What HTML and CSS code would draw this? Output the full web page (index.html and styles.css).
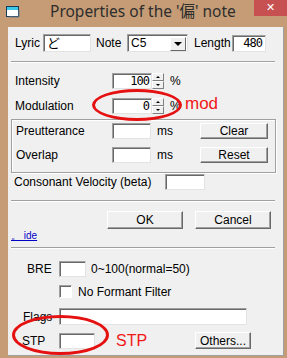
FILE: index.html
```html
<!DOCTYPE html>
<html lang="en">
<head>
    <meta charset="UTF-8">
    <title>Properties</title>
    <link rel="stylesheet" href="styles.css">
</head>
<body>
    <div class="window">
        <div class="titlebar">
            <svg class="app-icon" width="14" height="12" viewBox="0 0 14 12">
                <rect x="0.5" y="0.5" width="12" height="10" fill="#fff" stroke="#1a3a5a"/>
                <rect x="1" y="1" width="11" height="3" fill="#3cc8e8"/>
                <path d="M13 4 V11 H3" fill="none" stroke="#6a7a8a"/>
            </svg>
            <span class="title">Properties of the '偏' note</span>
            <span class="close">✕</span>
        </div>

        <div class="client">
            <div class="row row-top">
                <span class="lbl lbl-lyric">Lyric</span>
                <div class="field f-lyric">ど</div>
                <span class="lbl lbl-note">Note</span>
                <div class="select">
                    <span class="sel-text">C5</span>
                    <span class="sel-btn"><i class="tri-down big"></i></span>
                </div>
                <span class="lbl lbl-length">Length</span>
                <div class="field f-length num">480</div>
            </div>

            <div class="sep sep-1"></div>

            <div class="row row-spin">
                <span class="lbl lbl-wide">Intensity</span>
                <div class="field f-spin num">100</div>
                <div class="arrows"><span class="arr"><i class="tri-up"></i></span><span class="arr"><i class="tri-down"></i></span></div>
                <span class="pct">%</span>
            </div>
            <div class="row row-spin row-mod">
                <span class="lbl lbl-wide">Modulation</span>
                <div class="field f-spin num">0</div>
                <div class="arrows"><span class="arr"><i class="tri-up"></i></span><span class="arr"><i class="tri-down"></i></span></div>
                <span class="pct">%</span>
            </div>

            <div class="group">
                <div class="row g-row">
                    <span class="lbl lbl-group">Preutterance</span>
                    <div class="field f-ms"></div>
                    <span class="unit">ms</span>
                    <button class="btn btn-small">Clear</button>
                </div>
                <div class="row g-row g-row-2">
                    <span class="lbl lbl-group">Overlap</span>
                    <div class="field f-ms"></div>
                    <span class="unit">ms</span>
                    <button class="btn btn-small">Reset</button>
                </div>
            </div>

            <div class="row row-cons">
                <span class="lbl lbl-cons">Consonant Velocity (beta)</span>
                <div class="field f-cons"></div>
            </div>

            <div class="sep sep-2"></div>

            <div class="row row-buttons">
                <button class="btn btn-dlg">OK</button>
                <button class="btn btn-dlg">Cancel</button>
            </div>

            <a class="link" href="#">。 ide</a>

            <div class="sep sep-3"></div>

            <div class="row row-bre">
                <span class="lbl lbl-bre">BRE</span>
                <div class="field f-bre"></div>
                <span class="hint">0~100(normal=50)</span>
            </div>
            <div class="row row-check">
                <span class="check"></span>
                <span class="check-text">No Formant Filter</span>
            </div>
            <div class="row row-flags">
                <span class="lbl lbl-bre">Flags</span>
                <div class="field f-flags"></div>
            </div>
            <div class="row row-stp">
                <span class="lbl lbl-bre">STP</span>
                <div class="field f-stp"></div>
                <button class="btn btn-others">Others...</button>
            </div>
        </div>

        <!-- hand drawn marks on top of the screenshot -->
        <div class="mark ring-mod"></div>
        <div class="mark note-mod">mod</div>
        <div class="mark ring-stp"></div>
        <div class="mark note-stp">STP</div>
    </div>
</body>
</html>
```

FILE: styles.css
```css
*{
    box-sizing: border-box;
}
body{
    margin: 0;
    background: #C59C75;
}
.window{
    position: relative;
    width: 287px;
    height: 358px;
    padding: 0 3px 2px 8px;
    background: #C59C75;
    font-family: "Liberation Sans", Arial, sans-serif;
    font-size: 12px;
    color: #000;
}
/*title bar*/
.titlebar{
    position: relative;
    height: 27px;
    display: flex;
    align-items: flex-start;
}
.app-icon{
    margin: 6px 0 0 -2px;
}
.title{
    margin: 1px 0 0 30px;
    font-family: "Noto Sans", "Noto Sans CJK JP", sans-serif;
    font-size: 15.5px;
    line-height: 20px;
    color: #2e2e2e;
}
.close{
    position: absolute;
    top: 0;
    right: -3px;
    width: 33px;
    height: 16px;
    background: #C75050;
    color: #fff;
    font-family: "DejaVu Sans", sans-serif;
    font-size: 11px;
    font-weight: bold;
    line-height: 16px;
    text-align: center;
}
/*client area*/
.client{
    height: 329px;
    background: #F0F0F0;
    border-right: 1px solid #A0A0A0;
    border-bottom: 1px solid #A0A0A0;
    display: flex;
    flex-direction: column;
}
.row{
    display: flex;
    align-items: center;
}
.field{
    height: 17px;
    background: #fff;
    border: 1px solid;
    border-color: #A0A0A0 #E3E3E3 #E3E3E3 #A0A0A0;
    box-shadow: inset 1px 1px 0 #696969;
    padding: 0 3px;
    line-height: 15px;
    white-space: nowrap;
}
.num{
    text-align: right;
    font-family: "DejaVu Sans Mono", monospace;
    font-size: 12px;
    letter-spacing: -1px;
}
.lbl{
    flex: none;
}
.row-top{
    height: 18px;
    margin-top: 7px;
    padding-left: 7px;
}
.lbl-lyric{ width: 28px; }
.f-lyric{
    width: 48px;
    height: 18px;
    font-family: "Noto Sans CJK JP", sans-serif;
    font-size: 13px;
    line-height: 15px;
}
.lbl-note{ width: 31px; margin-left: 5px; }
.select{
    width: 61px;
    height: 18px;
    display: flex;
    background: #fff;
    border: 1px solid;
    border-color: #A0A0A0 #E3E3E3 #E3E3E3 #A0A0A0;
    box-shadow: inset 1px 1px 0 #696969;
    padding: 2px 1px 1px 3px;
}
.sel-text{
    flex: 1;
    line-height: 13px;
}
.sel-btn{
    width: 16px;
    height: 14px;
    background: #F0F0F0;
    border: 1px solid;
    border-color: #fff #696969 #696969 #fff;
    display: flex;
    align-items: center;
    justify-content: center;
}
.lbl-length{ width: 38px; margin-left: 6px; }
.f-length{ width: 34px; }

.sep{
    height: 2px;
    margin-left: 3px;
    width: 264px;
    border-top: 1px solid #A0A0A0;
    border-bottom: 1px solid #fff;
}
.sep-1{ margin-top: 9px; }

/*spin rows*/
.row-spin{
    height: 16px;
    margin-top: 10px;
    padding-left: 7px;
}
.row-mod{ margin-top: 9px; }
.lbl-wide{ width: 97px; }
.f-spin{
    width: 40px;
    height: 16px;
    padding-right: 2px;
}
.arrows{
    width: 12px;
    height: 16px;
    display: flex;
    flex-direction: column;
}
.arr{
    flex: 1;
    background: #F0F0F0;
    border: 1px solid;
    border-color: #fff #808080 #808080 #fff;
    display: flex;
    align-items: center;
    justify-content: center;
}
.pct{ margin-left: 6px; }
.tri-up, .tri-down{
    width: 0;
    height: 0;
    border-left: 2px solid transparent;
    border-right: 2px solid transparent;
}
.tri-up{ border-bottom: 2px solid #000; }
.tri-down{ border-top: 2px solid #000; }
.tri-down.big{
    border-left-width: 4px;
    border-right-width: 4px;
    border-top-width: 4px;
}

/*group box*/
.group{
    margin: 5px 0 0 3px;
    width: 265px;
    height: 54px;
    border: 1px solid #A0A0A0;
    box-shadow: inset 1px 1px 0 #fff, 1px 1px 0 #fff;
    padding: 3px 7px 0 4px;
}
.g-row{ height: 16px; }
.g-row-2{ margin-top: 8px; }
.lbl-group{ width: 96px; }
.f-ms{
    width: 39px;
    height: 16px;
}
.unit{ margin-left: 6px; }
.btn{
    font-family: "Liberation Sans", Arial, sans-serif;
    font-size: 12px;
    color: #000;
    background: #F0F0F0;
    border: 1px solid;
    border-color: #fff #696969 #696969 #fff;
    box-shadow: inset -1px -1px 0 #A0A0A0;
    padding: 0;
    line-height: 14px;
}
.btn-small{
    margin-left: auto;
    width: 68px;
    height: 16px;
}
.row-cons{
    height: 16px;
    margin-top: 1px;
    padding-left: 6px;
}
.lbl-cons{ width: 151px; }
.f-cons{
    width: 40px;
    height: 16px;
}
.sep-2{ margin-top: 10px; }
.row-buttons{
    margin-top: 9px;
    padding-left: 99px;
    gap: 12px;
}
.btn-dlg{
    width: 76px;
    height: 18px;
    font-size: 12px;
}
.link{
    align-self: flex-start;
    margin: 0 0 0 3px;
    height: 14px;
    font-size: 10px;
    line-height: 14px;
    color: #0000C8;
}
.sep-3{ margin-top: 4px; }
.row-bre{
    height: 16px;
    margin-top: 12px;
    padding-left: 19px;
}
.lbl-bre{ width: 32px; }
.f-bre{
    width: 27px;
    height: 16px;
}
.hint{ margin-left: 5px; }
.row-check{
    height: 13px;
    margin-top: 8px;
    padding-left: 51px;
}
.check{
    width: 13px;
    height: 13px;
    background: #fff;
    border: 1px solid;
    border-color: #A0A0A0 #fff #fff #A0A0A0;
    box-shadow: inset 1px 1px 0 #696969;
}
.check-text{ margin-left: 6px; }
.row-flags{
    height: 17px;
    margin-top: 10px;
    padding-left: 15px;
}
.row-flags .lbl-bre{ width: 36px; }
.f-flags{
    width: 188px;
    height: 17px;
}
.row-stp{
    height: 17px;
    margin-top: 7px;
    padding-left: 14px;
}
.row-stp .lbl-bre{ width: 37px; }
.f-stp{
    width: 36px;
    height: 16px;
}
.btn-others{
    margin-left: 100px;
    width: 56px;
    height: 17px;
}

/*red marks*/
.mark{
    position: absolute;
    color: #F01818;
    font-family: "Liberation Sans", Arial, sans-serif;
}
.ring-mod, .ring-stp{
    border: 3px solid #E51010;
    border-radius: 50%;
}
.ring-mod{
    left: 92px;
    top: 89px;
    width: 90px;
    height: 32px;
}
.ring-stp{
    left: 12px;
    top: 315px;
    width: 97px;
    height: 40px;
}
.note-mod{
    left: 185px;
    top: 94px;
    font-size: 17px;
}
.note-stp{
    left: 116px;
    top: 332px;
    font-size: 16px;
}
```
